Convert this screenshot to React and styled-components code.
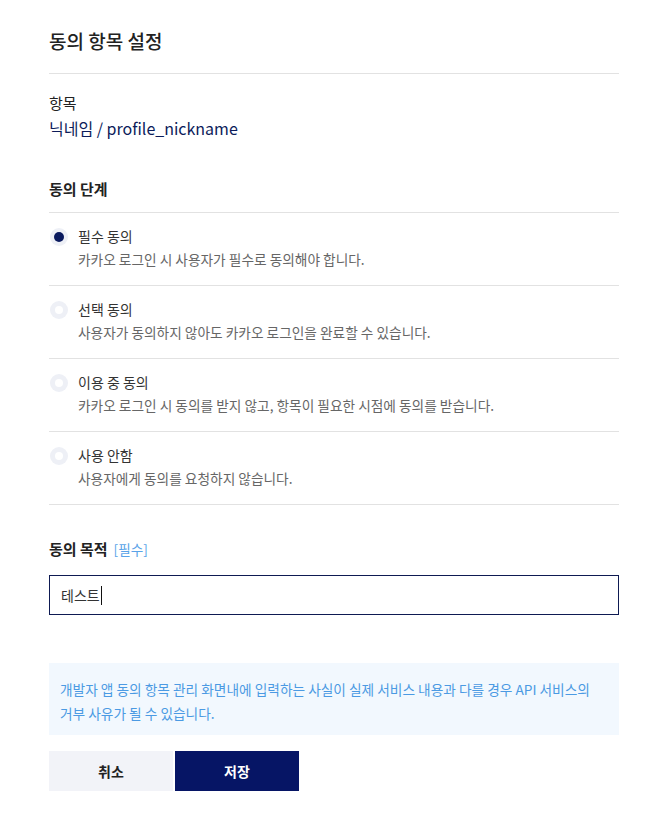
import styled, { createGlobalStyle } from "styled-components";

const GlobalStyle = createGlobalStyle`
  body {
    margin: 0;
    background: #fff;
    font-family: "Noto Sans CJK KR", "Noto Sans", sans-serif;
    color: #222;
  }
`;

const Wrap = styled.div`
  width: 570px;
  padding: 25px 45px 40px 49px;
`;
const Title = styled.h2`
  font-size: 19px;
  font-weight: 500;
  color: #222;
  margin: 0;
  padding-bottom: 16px;
  line-height: 32px;
  border-bottom: 1px solid #e2e2e2;
`;
const ItemLabel = styled.div`
  margin-top: 18px;
  font-size: 15px;
  line-height: 22px;
  color: #222;
`;
const ItemValue = styled.div`
  margin-top: 2px;
  font-size: 16px;
  line-height: 24px;
  color: #0c1c5a;
`;
const SectionTitle = styled.h3`
  margin: ${(p) => p.$top}px 0 0;
  font-size: 15px;
  font-weight: 700;
  line-height: 22px;
  color: #222;
  padding-bottom: ${(p) => p.$bottom}px;
  border-bottom: ${(p) => (p.$line ? "1px solid #e2e2e2" : "none")};
  display: flex;
  align-items: center;
  gap: 6px;
`;
const Required = styled.span`
  font-size: 13.6px;
  font-weight: 400;
  color: #5aa3e8;
`;
const OptionRow = styled.label`
  display: flex;
  gap: 10px;
  padding: 13px 0 16px 1px;
  border-bottom: 1px solid #e2e2e2;
`;
const Radio = styled.span`
  flex: none;
  width: 18px;
  height: 18px;
  margin-top: 2px;
  border-radius: 50%;
  background: #eef0f6;
  display: flex;
  align-items: center;
  justify-content: center;
  &::after {
    content: "";
    width: ${(p) => (p.$on ? 10 : 8)}px;
    height: ${(p) => (p.$on ? 10 : 8)}px;
    border-radius: 50%;
    background: ${(p) => (p.$on ? "#0a1a5e" : "#fff")};
  }
`;
const OptionText = styled.div`
  display: flex;
  flex-direction: column;
  gap: 3px;
`;
const OptionName = styled.span`
  font-size: 14px;
  line-height: 20px;
  color: #333;
`;
const OptionDesc = styled.span`
  font-size: 13.7px;
  line-height: 20px;
  color: #666;
`;
const Input = styled.div`
  margin-top: 15px;
  height: 38px;
  border: 1px solid #0e1a52;
  display: flex;
  align-items: center;
  padding: 0 11px;
  font-size: 14px;
  color: #333;
`;
const Caret = styled.span`
  display: inline-block;
  width: 1px;
  height: 19px;
  background: #111;
  margin-left: 1px;
`;
const Notice = styled.div`
  margin-top: 48px;
  background: #f2f8fe;
  padding: 14px 11px 10px;
  font-size: 13.7px;
  line-height: 24px;
  color: #4b9ae3;
  word-break: keep-all;
`;
const Buttons = styled.div`
  display: flex;
  gap: 2px;
  margin-top: 16px;
`;
const Button = styled.button`
  width: 124px;
  height: 40px;
  border: none;
  font-family: inherit;
  font-size: 14px;
  font-weight: 700;
  background: ${(p) => (p.$primary ? "#061565" : "#f2f3f8")};
  color: ${(p) => (p.$primary ? "#fff" : "#222")};
  cursor: pointer;
`;

const options = [
  { name: "필수 동의", desc: "카카오 로그인 시 사용자가 필수로 동의해야 합니다.", on: true },
  { name: "선택 동의", desc: "사용자가 동의하지 않아도 카카오 로그인을 완료할 수 있습니다." },
  { name: "이용 중 동의", desc: "카카오 로그인 시 동의를 받지 않고, 항목이 필요한 시점에 동의를 받습니다." },
  { name: "사용 안함", desc: "사용자에게 동의를 요청하지 않습니다." },
];

export default function App() {
  return (
    <Wrap>
      <GlobalStyle />
      <Title>동의 항목 설정</Title>
      <ItemLabel>항목</ItemLabel>
      <ItemValue>닉네임 / profile_nickname</ItemValue>
      <SectionTitle $top={38} $bottom={12} $line>
        동의 단계
      </SectionTitle>
      {options.map((o) => (
        <OptionRow key={o.name}>
          <Radio $on={o.on} />
          <OptionText>
            <OptionName>{o.name}</OptionName>
            <OptionDesc>{o.desc}</OptionDesc>
          </OptionText>
        </OptionRow>
      ))}
      <SectionTitle $top={33} $bottom={0}>
        동의 목적 <Required>[필수]</Required>
      </SectionTitle>
      <Input>
        테스트
        <Caret />
      </Input>
      <Notice>
        개발자 앱 동의 항목 관리 화면내에 입력하는 사실이 실제 서비스 내용과 다를 경우 API 서비스의
        거부 사유가 될 수 있습니다.
      </Notice>
      <Buttons>
        <Button>취소</Button>
        <Button $primary>저장</Button>
      </Buttons>
    </Wrap>
  );
}
